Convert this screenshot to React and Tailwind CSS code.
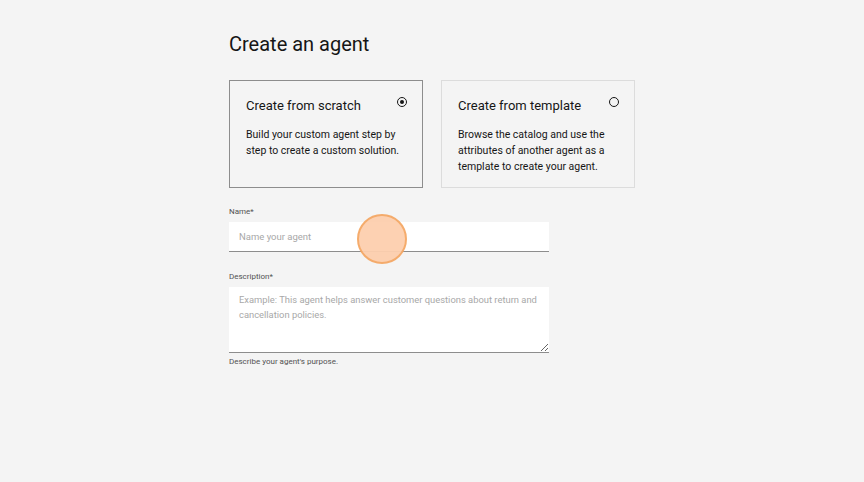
import React, { useState } from 'react';

const FONT = "font-['Roboto','Liberation_Sans',sans-serif]";

function OptionCard({ title, body, selected, onSelect }) {
  return (
    <div
      role="button"
      tabIndex={0}
      onClick={onSelect}
      className={`relative w-[194px] h-[108px] px-4 pt-[15px] bg-[#f4f4f4] border cursor-pointer ${selected ? 'border-[#8d8d8d]' : 'border-[#dcdcdc]'}`}
    >
      <span className="absolute top-[16px] right-[15px] w-[10px] h-[10px] rounded-full border border-[#161616] flex items-center justify-center">
        {selected && <span className="w-[4px] h-[4px] rounded-full bg-[#161616]" />}
      </span>
      <h3 className="text-[13px] leading-[20px] text-[#161616]">{title}</h3>
      <p className="mt-[11px] text-[10.5px] leading-[16px] text-[#161616] pr-1">{body}</p>
    </div>
  );
}

export default function App() {
  const [mode, setMode] = useState('scratch');

  return (
    <div className={`relative w-[864px] h-[482px] bg-[#f4f4f4] overflow-hidden ${FONT}`}>
      <div className="pl-[229px] pt-[30px]">
        <h1 className="text-[20px] leading-[28px] text-[#161616] font-normal">Create an agent</h1>

        <div className="mt-[22px] flex gap-[18px]">
          <OptionCard
            title="Create from scratch"
            body="Build your custom agent step by step to create a custom solution."
            selected={mode === 'scratch'}
            onSelect={() => setMode('scratch')}
          />
          <OptionCard
            title="Create from template"
            body="Browse the catalog and use the attributes of another agent as a template to create your agent."
            selected={mode === 'template'}
            onSelect={() => setMode('template')}
          />
        </div>

        <div className="mt-[18px] w-[320px]">
          <label className="block text-[8px] leading-[12px] text-[#525252]">Name*</label>
          <input
            type="text"
            placeholder="Name your agent"
            className="mt-[4px] block w-full h-[30px] bg-white border-b border-[#8d8d8d] px-[10px] text-[9.5px] text-[#161616] placeholder:text-[#a8a8a8] outline-none"
          />

          <label className="block mt-[19px] text-[8px] leading-[12px] text-[#525252]">Description*</label>
          <textarea
            placeholder="Example: This agent helps answer customer questions about return and cancellation policies."
            className="mt-[4px] block w-full h-[66px] bg-white border-b border-[#8d8d8d] pl-[10px] pr-[4px] py-[5px] text-[9.4px] leading-[15px] text-[#161616] placeholder:text-[#a8a8a8] outline-none resize-y"
          />
          <p className="mt-[3px] text-[8px] leading-[12px] text-[#525252]">Describe your agent's purpose.</p>
        </div>
      </div>

      <div className="absolute left-[357px] top-[214px] w-[50px] h-[50px] rounded-full bg-[#fdcfae] border-2 border-[#f5a865] opacity-95 pointer-events-none" />
    </div>
  );
}
